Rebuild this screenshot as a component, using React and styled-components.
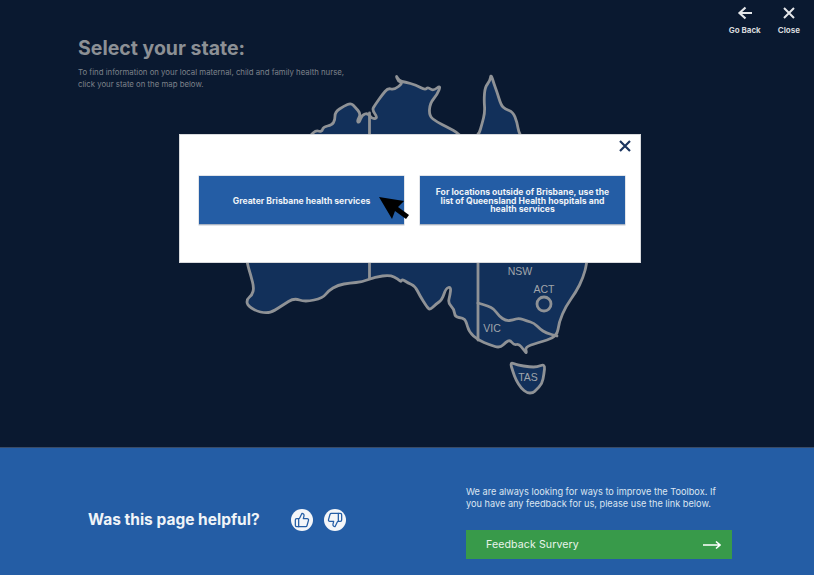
import React from "react";
import styled, { createGlobalStyle } from "styled-components";
import { ThumbsUp, ThumbsDown } from "lucide-react";

// rounds a traced outline through the midpoints, the way the map coast looks
const smooth = (pts, closed = true) => {
  const mid = (a, b) => [(a[0] + b[0]) / 2, (a[1] + b[1]) / 2];
  const start = closed ? mid(pts[pts.length - 1], pts[0]) : pts[0];
  let d = `M${start[0]} ${start[1]}`;
  pts.forEach((p, i) => {
    const next = pts[(i + 1) % pts.length];
    if (!closed && i === pts.length - 1) {
      d += ` L${p[0]} ${p[1]}`;
    } else {
      const m = mid(p, next);
      d += ` Q${p[0]} ${p[1]} ${m[0]} ${m[1]}`;
    }
  });
  return closed ? `${d} Z` : d;
};

const mainland = smooth([
  [247, 263], [251, 276], [254, 288], [252, 295], [247, 299], [247, 305], [256, 311], [265, 313],
  [272, 312], [283, 305], [294, 298], [305, 302], [323, 298], [328, 291], [338, 285], [350, 283],
  [362, 282], [375, 277], [390, 275], [398, 279], [401, 282], [402, 279], [408, 283], [415, 286],
  [420, 296], [427, 307], [430, 310], [436, 304], [442, 300], [446, 288], [451, 287], [450, 295],
  [448, 303], [454, 309], [455, 317], [463, 318], [466, 321], [469, 332], [478, 340], [490, 345],
  [500, 348], [506, 342], [510, 340], [514, 345], [519, 344], [523, 349], [527, 354], [525, 347],
  [537, 343], [557, 337], [559, 322], [566, 306], [576, 292], [583, 278], [587, 263], [592, 220],
  [565, 170], [530, 150], [519, 134], [517, 122], [513, 112], [505, 109], [501, 105], [497, 92],
  [494, 84], [491, 74], [490, 81], [485, 87], [484, 100], [485, 112], [482, 124], [479, 134],
  [470, 150], [460, 134], [447, 127], [437, 122], [429, 116], [430, 103], [437, 95], [441, 85],
  [433, 91], [428, 87], [425, 90], [416, 85], [405, 82], [399, 81], [396, 75], [398, 81],
  [403, 83], [394, 90], [388, 88], [382, 95], [375, 105], [372, 110], [378, 118], [372, 119],
  [368, 113], [362, 115], [359, 123], [357, 121], [361, 114], [355, 107], [351, 103], [344, 106],
  [335, 112], [335, 120], [332, 125], [323, 127], [322, 132], [314, 130], [300, 150], [260, 190],
  [240, 220],
]);

const tasmania = smooth([
  [510, 362], [517, 365], [530, 367], [537, 367], [545, 364], [544, 374], [542, 384], [536, 390],
  [533, 393], [527, 393], [521, 388], [516, 380], [513, 372],
]);

const vicBorder = smooth(
  [
    [478, 303], [488, 306], [494, 309], [499, 316], [506, 321], [513, 320], [519, 318],
    [527, 321], [534, 323], [540, 329], [546, 333], [557, 336],
  ],
  false
);

const GlobalStyle = createGlobalStyle`
  html, body {
    margin: 0;
    padding: 0;
    background: #0a1930;
  }
  * { box-sizing: border-box; }
`;

const Page = styled.div`
  position: relative;
  width: 814px;
  height: 575px;
  overflow: hidden;
  display: flex;
  flex-direction: column;
  font-family: Inter, "Liberation Sans", sans-serif;
`;

const Main = styled.main`
  height: 447px;
  flex: none;
  display: grid;
  background: #0a1930;
`;

const Layer = styled.div`
  grid-area: 1 / 1;
`;

const Intro = styled(Layer)`
  padding: 36px 0 0 78px;
  color: #8c9095;
`;

const Title = styled.h1`
  margin: 0;
  font-size: 19.5px;
  line-height: 24px;
  font-weight: 700;
`;

const IntroText = styled.p`
  margin: 6px 0 0;
  font-size: 7.8px;
  line-height: 12px;
  color: #7d828a;
  white-space: nowrap;
`;

const TopNav = styled(Layer)`
  display: flex;
  justify-content: flex-end;
  align-items: flex-start;
  gap: 17px;
  padding: 5px 14px 0 0;
`;

const NavItem = styled.div`
  display: flex;
  flex-direction: column;
  align-items: center;
  gap: 4px;
  color: #d5d8dc;
  font-size: 8px;
  line-height: 11px;
  font-weight: 700;
`;

const MapLayer = styled(Layer)`
  padding: 70px 0 0 240px;
`;

const StateLabel = styled.text`
  fill: #a0a5ab;
  font-family: "Liberation Sans", Arial, sans-serif;
  font-size: 10.5px;
  text-anchor: middle;
`;

const Modal = styled.div`
  position: absolute;
  left: 179px;
  top: 134px;
  width: 462px;
  height: 129px;
  background: #fff;
  border: 1px solid #d8dadd;
  display: flex;
  align-items: center;
  gap: 16px;
  padding: 0 15px 0 19px;
`;

const ModalClose = styled.div`
  position: absolute;
  top: 4px;
  right: 8px;
  line-height: 0;
`;

const Choice = styled.button`
  width: 205px;
  height: 49px;
  margin-top: 3px;
  padding: 3px 14px 0;
  background: #245da5;
  border: 0;
  border-bottom: 1px solid #a9b3c2;
  box-shadow: 0 0 0 0.5px #c3cad4;
  color: #eef2f7;
  font-family: inherit;
  font-size: 8.6px;
  line-height: 8.6px;
  font-weight: 700;
  text-align: center;
`;

const Pointer = styled.svg`
  position: absolute;
  left: 376px;
  top: 194px;
`;

const Footer = styled.footer`
  flex: 1;
  background: #245da5;
  border-top: 1px solid #3a4b66;
  display: grid;
  grid-template-columns: 378px 1fr;
  padding: 0 82px 0 88px;
`;

const Helpful = styled.div`
  display: flex;
  align-items: center;
  padding-top: 16px;
  color: #f0f4f8;
`;

const HelpfulTitle = styled.h2`
  margin: 0;
  width: 203px;
  font-size: 15.5px;
  line-height: 20px;
  font-weight: 700;
  white-space: nowrap;
`;

const Votes = styled.div`
  display: flex;
  gap: 11px;
`;

const Vote = styled.div`
  width: 22px;
  height: 22px;
  border-radius: 50%;
  background: #f4f6f9;
  color: #245da5;
  display: flex;
  align-items: center;
  justify-content: center;
`;

const FeedbackBox = styled.div`
  padding-top: 38px;
`;

const FeedbackText = styled.p`
  margin: 0;
  color: #dbe5f1;
  font-size: 9.2px;
  line-height: 12px;
  white-space: nowrap;
`;

const FeedbackButton = styled.div`
  margin-top: 20px;
  height: 29px;
  background: #389a4a;
  color: #e8f4ea;
  display: flex;
  align-items: center;
  justify-content: space-between;
  padding: 0 11px 0 20px;
  font-size: 10.6px;
  letter-spacing: 0.1px;
`;

const App = () => (
  <Page>
    <GlobalStyle />
    <Main>
      <MapLayer>
        <svg width="360" height="335" viewBox="240 70 360 335">
          <g fill="#12305a" stroke="#8f9296" strokeWidth="2.8" strokeLinejoin="round" strokeLinecap="round">
            <path d={mainland} />
            <path d={tasmania} />
            <path d="M369.5 113 V278 M478 134 V340" fill="none" />
            <path d={vicBorder} fill="none" />
            <circle cx="544" cy="304" r="7" fill="none" />
          </g>
          <StateLabel x="520" y="275">NSW</StateLabel>
          <StateLabel x="544" y="293">ACT</StateLabel>
          <StateLabel x="492" y="332">VIC</StateLabel>
          <StateLabel x="528" y="381">TAS</StateLabel>
        </svg>
      </MapLayer>
      <Intro>
        <Title>Select your state:</Title>
        <IntroText>
          To find information on your local maternal, child and family health nurse,
          <br />
          click your state on the map below.
        </IntroText>
      </Intro>
      <TopNav>
        <NavItem>
          <svg width="16" height="16" viewBox="0 0 16 16" fill="none" stroke="#e4e6e9" strokeWidth="2.2">
            <path d="M15 8 H3 M8.5 2.5 L2.5 8 L8.5 13.5" />
          </svg>
          Go Back
        </NavItem>
        <NavItem>
          <svg width="16" height="16" viewBox="0 0 16 16" fill="none" stroke="#e4e6e9" strokeWidth="2">
            <path d="M3 3 L13 13 M13 3 L3 13" />
          </svg>
          Close
        </NavItem>
      </TopNav>
    </Main>
    <Footer>
      <Helpful>
        <HelpfulTitle>Was this page helpful?</HelpfulTitle>
        <Votes>
          <Vote>
            <ThumbsUp size={16} strokeWidth={1.9} />
          </Vote>
          <Vote>
            <ThumbsDown size={16} strokeWidth={1.9} />
          </Vote>
        </Votes>
      </Helpful>
      <FeedbackBox>
        <FeedbackText>
          We are always looking for ways to improve the Toolbox. If
          <br />
          you have any feedback for us, please use the link below.
        </FeedbackText>
        <FeedbackButton>
          Feedback Survery
          <svg width="18" height="10" viewBox="0 0 18 10" fill="none" stroke="#fff" strokeWidth="1.6">
            <path d="M0 5 H17 M13 1.5 L17 5 L13 8.5" />
          </svg>
        </FeedbackButton>
      </FeedbackBox>
    </Footer>
    <Modal>
      <ModalClose>
        <svg width="14" height="14" viewBox="0 0 14 14" fill="none" stroke="#1b3560" strokeWidth="2.2">
          <path d="M2 2 L12 12 M12 2 L2 12" />
        </svg>
      </ModalClose>
      <Choice>Greater Brisbane health services</Choice>
      <Choice>
        For locations outside of Brisbane, use the list of Queensland Health hospitals and
        health services
      </Choice>
    </Modal>
    <Pointer width="36" height="28" viewBox="376 194 36 28">
      <path
        d="M379 197 L404 201 L398 207 L409 215 L406 219 L395 211 L392 219 Z"
        fill="#000"
      />
    </Pointer>
  </Page>
);

export default App;
